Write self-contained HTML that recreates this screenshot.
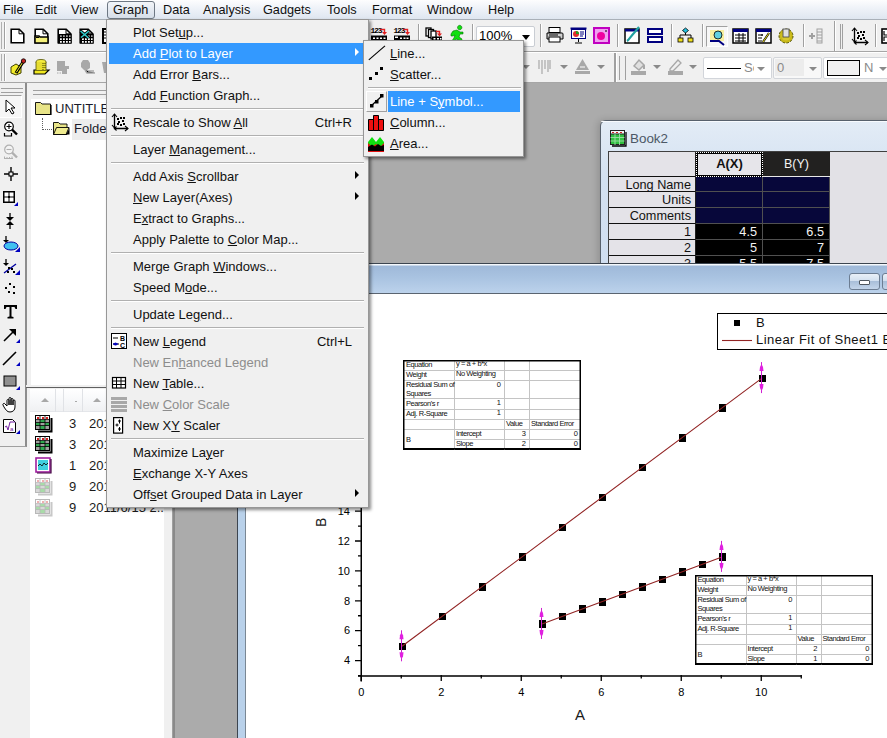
<!DOCTYPE html>
<html><head><meta charset="utf-8">
<style>
*{margin:0;padding:0;box-sizing:border-box}
html,body{width:887px;height:738px;overflow:hidden;background:#f0f0f0;font-family:"Liberation Sans",sans-serif;color:#000;position:relative}
.a{position:absolute}
.t{white-space:nowrap}
svg{overflow:visible}
.vsep{width:2px;border-left:1px solid #a0a0a0;border-right:1px solid #fff}
#menubar{left:0;top:0;width:887px;height:20px;background:linear-gradient(#fdfdfe,#eef2f8 45%,#dfe6f0);border-bottom:1px solid #a9b0b8}
#menubar span{position:absolute;top:3px;font-size:12.7px;line-height:14px;color:#101010}
#tb1{left:0;top:20px;width:887px;height:32px;background:#f0f0f0;border-bottom:1px solid #a6a6a6}
#tb2{left:0;top:52px;width:887px;height:31px;background:#f0f0f0;border-bottom:1px solid #a6a6a6;border-top:1px solid #fff}
#mdi{left:172px;top:83px;width:715px;height:655px;background:#ababab;border-left:1px solid #a0a0a0;box-shadow:inset 2px 0 0 #8a8a8a}
#lefttools{left:0;top:83px;width:27px;height:364px;background:#f0f0f0;border-right:2px solid #8c8c8c;border-bottom:1px solid #a0a0a0}
#splitv{left:164px;top:83px;width:8px;height:655px;background:#f0f0f0}
#menu{left:106px;top:19px;width:263px;height:489px;background:#f0f0f0;border:1px solid #979797;box-shadow:2px 2px 3px rgba(0,0,0,.45)}
#sub{left:363px;top:40px;width:161px;height:117px;background:#f0f0f0;border:1px solid #979797;box-shadow:2px 2px 3px rgba(0,0,0,.45)}
.mi{position:absolute;left:26px;font-size:13px;line-height:21px;height:21px;white-space:nowrap;color:#111}
.hl{position:absolute;left:2px;width:257px;height:21px;background:#3399ff}
.wt{color:#fff!important}
.sep{position:absolute;left:4px;right:4px;height:2px;border-top:1px solid #b0b0b0;border-bottom:1px solid #fff}
.dis{color:#8d8d8d}
.sc{position:absolute;right:16px;font-size:13px;line-height:21px;color:#111}
.arr{position:absolute;left:248px;width:0;height:0;border-left:4px solid #000;border-top:4px solid transparent;border-bottom:4px solid transparent}
.wt + .arr, .arrw{border-left-color:#fff}
u{text-decoration:underline;text-underline-offset:.9px;text-decoration-thickness:1px}
.smi{position:absolute;left:26px;font-size:13px;line-height:21px;height:21px;white-space:nowrap;color:#111}
/* book2 */
#book{left:600px;top:120px;width:300px;height:160px;background:linear-gradient(#dfe9f5,#cfdff0);border:1px solid #5a6470;border-radius:6px 0 0 0}
.cell{position:absolute;font-size:12.5px;line-height:16px;text-align:right;padding-right:4px;white-space:nowrap}
/* graph */
#gwin{left:237px;top:263px;width:660px;height:480px;background:linear-gradient(#aac3e0,#bcd3ec);border:1px solid #404850}
#plot{left:246px;top:294px;width:641px;height:444px;background:#fff}
.tk{position:absolute;background:#000}
.tl{position:absolute;font-size:11px;line-height:12px;white-space:nowrap;color:#000}
.pt{position:absolute;width:7.5px;height:7.5px;background:#000}
.st2{font-size:7.5px;line-height:10px;color:#111;letter-spacing:-.45px;transform:translateY(-1px)}
</style></head><body>
<div id="menubar" class="a">
 <span style="left:3px">File</span>
 <span style="left:35px">Edit</span>
 <span style="left:71px">View</span>
 <div class="a" style="left:107px;top:1px;width:48px;height:18px;border:1px solid #6e7884;border-radius:3px;background:linear-gradient(#f2f5f9,#d6dee9)"></div>
 <span style="left:113px">Graph</span>
 <span style="left:163px">Data</span>
 <span style="left:203px">Analysis</span>
 <span style="left:263px">Gadgets</span>
 <span style="left:327px">Tools</span>
 <span style="left:372px">Format</span>
 <span style="left:427px">Window</span>
 <span style="left:488px">Help</span>
</div>
<div id="tb1" class="a"></div>
<div id="tb2" class="a"></div>
<div class="a" style="left:1px;top:22px;width:1px;height:27px;background:#b0b0b0"></div><div class="a" style="left:4px;top:22px;width:2px;height:27px;border-left:1px solid #a0a0a0;border-right:1px solid #fff"></div>
<div class="a" style="left:1px;top:54px;width:1px;height:27px;background:#b0b0b0"></div><div class="a" style="left:4px;top:54px;width:2px;height:27px;border-left:1px solid #a0a0a0;border-right:1px solid #fff"></div>
<svg class="a" style="left:10px;top:28px" width="16" height="16" viewBox="0 0 16 16"><path d="M1.2 1.2h8l4.6 4.6v9h-12.6z" fill="#fff" stroke="#000" stroke-width="1.6"/><path d="M9 1.2v4.6h4.6" fill="none" stroke="#000" stroke-width="1"/></svg>
<svg class="a" style="left:34px;top:28px" width="16" height="16" viewBox="0 0 16 16"><path d="M1.2 1.2h8l4.6 4.6v9h-12.6z" fill="#fff" stroke="#000" stroke-width="1.6"/><path d="M9 1.2v4.6h4.6" fill="none" stroke="#000" stroke-width="1"/><path d="M1 8h4l1 1h8v6H1z" fill="#f4f07a" stroke="#000" stroke-width="1.5"/><path d="M2 9.5h3" stroke="#000"/></svg>
<svg class="a" style="left:57px;top:28px" width="16" height="16" viewBox="0 0 16 16"><path d="M1.2 1.2h8l4.6 4.6v9h-12.6z" fill="#fff" stroke="#000" stroke-width="1.6"/><path d="M9 1.2v4.6h4.6" fill="none" stroke="#000" stroke-width="1"/><rect x="1" y="6" width="13.6" height="9.6" fill="#000"/><path d="M3 7.3h1.8v1.8H3zM6 7.3h1.8v1.8H6zM9 7.3h1.8v1.8H9zM12 7.3h1.6v1.8H12z" fill="#a0a0a0"/><path d="M3 10.2h1.8v1.8H3zM6 10.2h1.8v1.8H6zM9 10.2h1.8v1.8H9zM12 10.2h1.6v1.8H12zM3 13.1h1.8v1.6H3zM6 13.1h1.8v1.6H6zM9 13.1h1.8v1.6H9zM12 13.1h1.6v1.6H12z" fill="#fff"/></svg>
<svg class="a" style="left:79px;top:28px" width="16" height="16" viewBox="0 0 16 16"><path d="M1.2 1.2h8l4.6 4.6v9h-12.6z" fill="#fff" stroke="#000" stroke-width="1.6"/><path d="M9 1.2v4.6h4.6" fill="none" stroke="#000" stroke-width="1"/><rect x="1" y="6" width="13.6" height="9.6" fill="#000"/><path d="M3 7.3h1.8v1.8H3zM6 7.3h1.8v1.8H6zM9 7.3h1.8v1.8H9zM12 7.3h1.6v1.8H12z" fill="#a0a0a0"/><path d="M3 10.2h1.8v1.8H3zM6 10.2h1.8v1.8H6zM9 10.2h1.8v1.8H9zM12 10.2h1.6v1.8H12zM3 13.1h1.8v1.6H3zM6 13.1h1.8v1.6H6zM9 13.1h1.8v1.6H9zM12 13.1h1.6v1.6H12z" fill="#fff"/><path d="M1.5 3l8 7M2 9.5l8-6.5" stroke="#000" stroke-width="3"/><path d="M1.5 3l8 7M2 9.5l8-6.5" stroke="#30c8c8" stroke-width="1.6"/></svg>
<svg class="a" style="left:101px;top:28px" width="6" height="16" viewBox="0 0 6 16"><path d="M2 1h5v14H2z" fill="#fff" stroke="#000" stroke-width="2"/><path d="M3 4h2M3 7h2M3 10h2" stroke="#000"/></svg>
<svg class="a" style="left:10px;top:58px" width="16" height="17" viewBox="0 0 16 17"><path d="M1 9l5-3 5 3v6l-5 2-5-2z" fill="#f3ec2a" stroke="#404000" stroke-width="1"/><path d="M6 15l7-11" stroke="#000" stroke-width="3.2"/><path d="M6.3 14.3l6.6-10.3" stroke="#f3ec2a" stroke-width="1"/><circle cx="13.5" cy="3" r="2.2" fill="#c02020" stroke="#000" stroke-width=".8"/></svg>
<svg class="a" style="left:33px;top:59px" width="17" height="16" viewBox="0 0 17 16"><path d="M1 11h15l-4 4H1z" fill="#f0e820" stroke="#000" stroke-width="1.2"/><ellipse cx="8" cy="3" rx="5" ry="2.5" fill="#f4ec40" stroke="#505000" stroke-width=".8"/><rect x="3" y="3" width="10" height="8" fill="#e6dd30"/><path d="M3 3v8M13 3v8" stroke="#505000" stroke-width=".8"/><path d="M10 4v7M12 4v6" stroke="#404000" stroke-dasharray="1 1"/></svg>
<svg class="a" style="left:56px;top:60px" width="16" height="15" viewBox="0 0 16 15"><path d="M1 1h8v5h4v3h-2v5H6v-3H1z" fill="#a8a8a8"/><path d="M1 10.5h5M1 13h5" stroke="#a8a8a8" stroke-dasharray="1.5 1"/></svg>
<svg class="a" style="left:80px;top:59px" width="15" height="16" viewBox="0 0 15 16"><path d="M3 1h5l2 3v5l-3 2H4L1 8V4z" fill="#a8a8a8"/><path d="M5 11l2 3h8M8 12h6" stroke="#a8a8a8" stroke-width="1.5"/></svg>
<svg class="a" style="left:102px;top:60px" width="5" height="15" viewBox="0 0 5 15"><path d="M0 2h5v11H2z" fill="#a8a8a8"/></svg>
<svg class="a" style="left:370px;top:26px" width="18" height="18" viewBox="0 0 18 18"><text x="0.5" y="7" font-size="8" font-family="Liberation Mono" font-weight="bold" letter-spacing="-1.2">123</text><path d="M10 3.5h4.5v3" stroke="#e02020" fill="none" stroke-width="1.4"/><path d="M12 6h5l-2.5 3z" fill="#e02020"/><rect x="1" y="9.5" width="16" height="5" fill="#000"/><path d="M3 11.5h2v1.5H3zM6.5 11.5h2v1.5h-2zM10 11.5h2v1.5h-2zM13.5 11.5h2v1.5h-2z" fill="#fff"/></svg>
<svg class="a" style="left:393px;top:26px" width="18" height="18" viewBox="0 0 18 18"><text x="0.5" y="7" font-size="8" font-family="Liberation Mono" font-weight="bold" letter-spacing="-1.2">123</text><path d="M10 3.5h4.5v3" stroke="#e02020" fill="none" stroke-width="1.4"/><path d="M12 6h5l-2.5 3z" fill="#e02020"/><rect x="1" y="9.5" width="16" height="5" fill="#000"/><path d="M2 10.5h3v1.5H2zM7 11.5h2v1.5H7zM10.5 11.5h2v1.5h-2zM13.5 11.5h2v1.5h-2z" fill="#fff"/></svg>
<div class="a vsep" style="left:418px;top:24px;height:23px"></div>
<svg class="a" style="left:425px;top:27px" width="18" height="18" viewBox="0 0 18 18"><rect x="1" y="1" width="5" height="8" fill="#fff" stroke="#000" stroke-width="1.3"/><rect x="3.5" y="2.5" width="5" height="8" fill="#fff" stroke="#000" stroke-width="1.3"/><rect x="6" y="4" width="5" height="8" fill="#fff" stroke="#000" stroke-width="1.3"/><path d="M11 4.5h3.5v2.5" stroke="#e02020" fill="none" stroke-width="1.4"/><path d="M12 6.5h5l-2.5 3z" fill="#e02020"/><rect x="7" y="9.5" width="10" height="4" fill="#000"/><path d="M8.5 11h2v1.5h-2zM12 11h2v1.5h-2zM15 11h1.5v1.5H15z" fill="#fff"/></svg>
<svg class="a" style="left:447px;top:26px" width="18" height="18" viewBox="0 0 18 18"><path d="M10.5 1.5a2.2 2.2 0 1 1 0 .1zM6 5l4-1 3 2 3 0v2l-3 0-1 3 3 2-1 4h-2l0-3-3-1-2 3H4l3-4 1-3-2 1-2 0v-2z" fill="#10e010" stroke="#007000" stroke-width=".6"/><path d="M0 17h6" stroke="#007000" stroke-width="1"/></svg>
<div class="a vsep" style="left:472px;top:24px;height:23px"></div>
<div class="a" style="left:476px;top:26px;width:59px;height:21px;background:#fff;border:1px solid #c9cdd3;border-radius:2px"></div><div class="a t" style="left:479px;top:29px;font-size:13px;line-height:14px">100%</div><div class="a" style="left:522px;top:35px;width:0;height:0;border-left:4px solid transparent;border-right:4px solid transparent;border-top:5px solid #000"></div>
<div class="a vsep" style="left:540px;top:24px;height:23px"></div>
<svg class="a" style="left:546px;top:27px" width="18" height="16" viewBox="0 0 18 16"><rect x="3" y=".5" width="11" height="5" fill="#fff" stroke="#000"/><path d="M1 6h15a1 1 0 0 1 1 1v5h-16z" fill="#d0d0d0" stroke="#000"/><rect x="3" y="10" width="11" height="5" fill="#fff" stroke="#000"/><path d="M3 8h9" stroke="#000"/></svg>
<svg class="a" style="left:570px;top:27px" width="17" height="17" viewBox="0 0 17 17"><rect x=".5" y=".5" width="16" height="2" fill="#000080"/><rect x="1.5" y="2.5" width="14" height="9" fill="#fff" stroke="#000080"/><circle cx="6" cy="7" r="3" fill="#e03030"/><path d="M6 7V4a3 3 0 0 1 3 3z" fill="#20a020"/><path d="M10 5h4M10 7h4M10 9h3" stroke="#000080"/><path d="M8.5 12v3M5 16h7" stroke="#000"/></svg>
<svg class="a" style="left:593px;top:27px" width="17" height="17" viewBox="0 0 17 17"><rect x="1" y="1" width="15" height="15" fill="#f0a0f0" stroke="#c000c0" stroke-width="2"/><circle cx="8" cy="9" r="4" fill="#f000a0"/><path d="M12 4h2" stroke="#000"/></svg>
<div class="a vsep" style="left:617px;top:24px;height:23px"></div>
<svg class="a" style="left:624px;top:27px" width="17" height="17" viewBox="0 0 17 17"><rect x="1" y="2" width="14" height="14" fill="#fff" stroke="#000" stroke-width="1.5"/><rect x="1" y="2" width="14" height="2.5" fill="#000080"/><path d="M3 14c2-1 4-5 7-8l5-6" stroke="#20a0a0" stroke-width="2.2" fill="none"/></svg>
<svg class="a" style="left:647px;top:28px" width="16" height="15" viewBox="0 0 16 15"><rect x="1" y="1" width="14" height="5" fill="#fff" stroke="#000080" stroke-width="2"/><rect x="1" y="9" width="14" height="5" fill="#fff" stroke="#000080" stroke-width="2"/></svg>
<div class="a vsep" style="left:671px;top:24px;height:23px"></div>
<svg class="a" style="left:677px;top:27px" width="17" height="17" viewBox="0 0 17 17"><path d="M8.5 5v3M3 11V8h11v3" stroke="#000" fill="none"/><path d="M8.5 1l3 2.5-3 2.5-3-2.5z" fill="#20c0e0" stroke="#000" stroke-width=".8"/><rect x="1" y="11" width="5" height="4" fill="#f0e020" stroke="#000" stroke-width=".8"/><rect x="11" y="11" width="5" height="4" fill="#f0e020" stroke="#000" stroke-width=".8"/></svg>
<div class="a vsep" style="left:702px;top:24px;height:23px"></div>
<div class="a" style="left:706px;top:26px;width:22px;height:21px;background:#f7f7f7;border:1px solid;border-color:#a0a0a0 #fff #fff #a0a0a0"></div>
<svg class="a" style="left:709px;top:29px" width="17" height="16" viewBox="0 0 17 16"><rect x="1" y="1" width="14" height="11" fill="#f7f0a0"/><circle cx="9" cy="6" r="4" fill="#60d0e0" stroke="#000" stroke-width=".8"/><path d="M1 12h9l5 4" stroke="#000080" stroke-width="2" fill="none"/></svg>
<svg class="a" style="left:732px;top:28px" width="17" height="16" viewBox="0 0 17 16"><rect x="1" y="1" width="15" height="14" fill="#fff" stroke="#000" stroke-width="1.5"/><rect x="1" y="1" width="15" height="3" fill="#000080"/><path d="M3 7h11M3 10h11M3 13h11M7 5v9M11 5v9" stroke="#000"/></svg>
<svg class="a" style="left:755px;top:28px" width="17" height="16" viewBox="0 0 17 16"><rect x="1" y="1" width="15" height="14" fill="#fff" stroke="#000" stroke-width="1.5"/><rect x="1" y="1" width="15" height="3" fill="#000080"/><path d="M3 7h5M3 10h4M3 13h4M7 6v2" stroke="#000"/><path d="M8 14l6-9" stroke="#000" stroke-width="2.2"/><path d="M8 14l6-9" stroke="#f0e020" stroke-width="1"/></svg>
<svg class="a" style="left:777px;top:27px" width="18" height="17" viewBox="0 0 18 17"><circle cx="9" cy="9" r="7" fill="#c8b818" stroke="#505000" stroke-width="1" stroke-dasharray="2.5 1.5"/><circle cx="9" cy="9" r="4.5" fill="#d8c830"/><rect x="6" y="2" width="6" height="8" fill="#e0e0e0" stroke="#404040" stroke-width=".8"/></svg>
<div class="a vsep" style="left:803px;top:24px;height:23px"></div>
<svg class="a" style="left:808px;top:28px" width="16" height="16" viewBox="0 0 16 16"><path d="M1 8h6M4 5v6" stroke="#a0a0a0" stroke-width="2"/><rect x="9" y="1" width="5" height="14" fill="none" stroke="#a0a0a0"/><path d="M9 4h5M9 7h5M9 10h5M9 13h5" stroke="#a0a0a0"/></svg>
<div class="a" style="left:834px;top:21px;width:2px;height:30px;background:#a0a0a0;border-right:1px solid #fff"></div>
<div class="a" style="left:840px;top:24px;width:3px;height:25px;border-left:1px solid #a0a0a0;border-right:1px solid #a0a0a0"></div>
<svg class="a" style="left:851px;top:27px" width="18" height="18" viewBox="0 0 18 18"><path d="M3.5 1.5V15.5H17" stroke="#000" stroke-width="1.3" fill="none"/><path d="M1 4l2.5-3 2.5 3M1 12l2.5 3M14 13l3 2.5-3 2.5M5.5 13.5l-2 2 2 2" stroke="#000" fill="none" stroke-width="1.1"/><path d="M6 5h2v2H6zM9 4h2v2H9zM12 4h2v2h-2zM7 8h2v2H7zM11 7h2v2h-2zM6 10h2v2H6zM9 11h2v2H9zM12 10h2v2h-2z" fill="#000"/></svg>
<div class="a vsep" style="left:875px;top:24px;height:23px"></div>
<svg class="a" style="left:881px;top:28px" width="8" height="16" viewBox="0 0 8 16"><rect x="1" y="1" width="14" height="14" fill="#fff" stroke="#000" stroke-width="1.6"/><path d="M3 3v4h3M3 13V9h3" stroke="#000" stroke-width="1.2" fill="none"/></svg>
<div class="a" style="left:522px;top:65px;width:0;height:0;border-left:4px solid transparent;border-right:4px solid transparent;border-top:4px solid #8a8a8a"></div>
<svg class="a" style="left:538px;top:59px" width="13" height="16" viewBox="0 0 13 16"><path d="M1 1v9M4 1v14M7 1v9M10 1v12M12 1v9" stroke="#a8a8a8" stroke-width="1.2"/></svg>
<div class="a" style="left:559.5px;top:65px;width:0;height:0;border-left:4px solid transparent;border-right:4px solid transparent;border-top:4px solid #8a8a8a"></div>
<svg class="a" style="left:574px;top:58px" width="17" height="17" viewBox="0 0 17 17"><path d="M8.5 1L2 12h13z" fill="#a8a8a8"/><rect x="1" y="13" width="15" height="3" fill="#a8a8a8"/><path d="M6 9h5" stroke="#fff"/></svg>
<div class="a" style="left:597px;top:65px;width:0;height:0;border-left:4px solid transparent;border-right:4px solid transparent;border-top:4px solid #8a8a8a"></div>
<div class="a" style="left:614px;top:53px;width:3px;height:29px;border-left:2px solid #a0a0a0;border-right:1px solid #fff"></div><div class="a" style="left:619px;top:56px;width:7px;height:24px;border-left:1px solid #a0a0a0;border-right:1px solid #a0a0a0"></div>
<svg class="a" style="left:630px;top:58px" width="17" height="17" viewBox="0 0 17 17"><path d="M4 8l5-6 5 5-5 5z" fill="#e0e0e0" stroke="#a8a8a8" stroke-width="1.5"/><path d="M14 7v4" stroke="#a8a8a8" stroke-width="2"/><rect x="1" y="13" width="15" height="4" fill="#a8a8a8"/></svg>
<div class="a" style="left:652.5px;top:65px;width:0;height:0;border-left:4px solid transparent;border-right:4px solid transparent;border-top:4px solid #8a8a8a"></div>
<svg class="a" style="left:667px;top:58px" width="17" height="17" viewBox="0 0 17 17"><path d="M3 11l8-9 3 3-8 8H3z" fill="#f0f0f0" stroke="#a8a8a8" stroke-width="1.3"/><rect x="1" y="13" width="15" height="4" fill="#a8a8a8"/></svg>
<div class="a" style="left:689px;top:65px;width:0;height:0;border-left:4px solid transparent;border-right:4px solid transparent;border-top:4px solid #8a8a8a"></div>
<div class="a" style="left:703px;top:57px;width:69px;height:22px;background:#fff;border:1px solid #d2d5da;border-radius:2px"></div><div class="a" style="left:707px;top:68px;width:34px;height:1px;background:#000"></div><div class="a t" style="left:744px;top:61px;font-size:13px;line-height:14px;color:#8a8a8a">Sc</div><div class="a" style="left:754px;top:58px;width:17px;height:20px;background:#fff"></div><div class="a" style="left:757px;top:67px;width:0;height:0;border-left:4px solid transparent;border-right:4px solid transparent;border-top:4px solid #8a8a8a"></div>
<div class="a" style="left:773px;top:57px;width:49px;height:22px;background:#f8f8f8;border:1px solid #d2d5da;border-radius:2px"></div><div class="a" style="left:775px;top:59px;width:29px;height:17px;background:#ececec"></div><div class="a t" style="left:777px;top:61px;font-size:13px;line-height:14px;color:#8a8a8a">0</div><div class="a" style="left:809px;top:67px;width:0;height:0;border-left:4px solid transparent;border-right:4px solid transparent;border-top:4px solid #8a8a8a"></div>
<div class="a" style="left:823px;top:57px;width:70px;height:22px;background:#fff;border:1px solid #d2d5da;border-radius:2px"></div><div class="a" style="left:827px;top:60px;width:33px;height:16px;background:#f0f0f0;border:1px solid #000"></div><div class="a t" style="left:864px;top:61px;font-size:13px;line-height:14px;color:#8a8a8a">N</div><div class="a" style="left:879px;top:67px;width:0;height:0;border-left:4px solid transparent;border-right:4px solid transparent;border-top:4px solid #8a8a8a"></div>
<div id="mdi" class="a"></div>
<div id="splitv" class="a"></div>
<div id="lefttools" class="a"></div>
<div class="a" style="left:1px;top:88px;width:22px;height:5px;border-top:1px solid #a0a0a0;border-bottom:1px solid #a0a0a0"></div>
<div class="a" style="left:0px;top:95px;width:22px;height:23px;background:#f6f6f6;border-top:1px solid #a0a0a0;border-right:1px solid #fff;border-bottom:1px solid #fff"></div>
<svg class="a" style="left:5px;top:99px" width="12" height="16" viewBox="0 0 12 16"><path d="M1 1v12l3-3 3 5 2-1-3-5h4z" fill="#fff" stroke="#000"/></svg>
<svg class="a" style="left:3px;top:121px" width="16" height="17" viewBox="0 0 16 17"><circle cx="6" cy="5.5" r="4.3" fill="#fff" stroke="#000" stroke-width="1.2"/><path d="M3.5 5.5h5M6 3v5" stroke="#000" stroke-width="1.1"/><path d="M9 8.5l5 5" stroke="#000" stroke-width="2.4"/><path d="M1.5 12v3h7v-3" stroke="#000" fill="none" stroke-width="1.2"/></svg>
<svg class="a" style="left:3px;top:144px" width="16" height="17" viewBox="0 0 16 17"><circle cx="6" cy="5.5" r="4.3" fill="#f4f4f4" stroke="#b0b0b0" stroke-width="1.2"/><path d="M3.5 5.5h5" stroke="#b0b0b0" stroke-width="1.1"/><path d="M9 8.5l5 5" stroke="#b0b0b0" stroke-width="2.4"/><path d="M1 14.5h9M1.5 12.5v2M4 13v2M6.5 13v2M9 12.5v2" stroke="#b0b0b0" fill="none"/></svg>
<svg class="a" style="left:4px;top:167px" width="14" height="14" viewBox="0 0 14 14"><path d="M7 0v5M7 9v5M0 7h5M9 7h5" stroke="#000" stroke-width="1.4"/><rect x="5" y="5" width="4" height="4" fill="none" stroke="#000" stroke-width="1.1"/></svg>
<svg class="a" style="left:2px;top:190px" width="18" height="17" viewBox="0 0 18 17"><rect x="1" y="1" width="12" height="12" fill="#000"/><path d="M2.5 2.5h4v4h-4zM7.5 2.5h4v4h-4zM2.5 7.5h4v4h-4zM7.5 7.5h4v4h-4z" fill="#fff"/><path d="M6 6h2v2H6z" fill="#000"/><path d="M16 12v4h-4z" fill="#0000c0"/></svg>
<svg class="a" style="left:3px;top:213px" width="14" height="16" viewBox="0 0 14 16"><path d="M7 0v5M7 11v5" stroke="#000" stroke-width="1.3"/><path d="M3 4l4 4 4-4zM3 12l4-4 4 4z" fill="#000"/></svg>
<svg class="a" style="left:2px;top:236px" width="19" height="16" viewBox="0 0 19 16"><path d="M4 0v5" stroke="#000" stroke-width="1.3"/><path d="M1 4l3 3 3-3z" fill="#000"/><ellipse cx="9" cy="10" rx="7" ry="4" fill="#40c0f0" stroke="#0000a0" stroke-width="1"/><path d="M18 11v5h-5z" fill="#0000c0"/></svg>
<svg class="a" style="left:2px;top:259px" width="19" height="16" viewBox="0 0 19 16"><path d="M4 0v5" stroke="#000" stroke-width="1.3"/><path d="M1 4l3 3 3-3z" fill="#000"/><path d="M2 14l12-9" stroke="#0000a0" stroke-width="1.3"/><path d="M6 8h2v2H6zM9 9h2v2H9zM11 12h2v2h-2zM5 12h2v2H5z" fill="#000"/><path d="M18 11v5h-5z" fill="#0000c0"/></svg>
<svg class="a" style="left:4px;top:282px" width="14" height="14" viewBox="0 0 14 14"><path d="M5 1h2v2H5zM1 5h2v2H1zM9 4h2v2H9zM4 9h2v2H4zM9 10h2v2H9z" fill="#000"/></svg>
<svg class="a" style="left:3px;top:304px" width="15" height="15" viewBox="0 0 15 15"><path d="M1 1h13v4h-1.5l-1-2H8.5v9.5l2 .5v1.5h-6V13l2-.5V3H3.5l-1 2H1z" fill="#000"/></svg>
<svg class="a" style="left:2px;top:327px" width="19" height="17" viewBox="0 0 19 17"><path d="M2 14L12 4" stroke="#000" stroke-width="1.6"/><path d="M7 2h7v7z" fill="#000"/><path d="M18 12v4h-4z" fill="#0000c0"/></svg>
<svg class="a" style="left:2px;top:350px" width="19" height="17" viewBox="0 0 19 17"><path d="M1 15L14 2" stroke="#000" stroke-width="1.6"/><path d="M18 12v4h-4z" fill="#0000c0"/></svg>
<svg class="a" style="left:2px;top:374px" width="19" height="17" viewBox="0 0 19 17"><rect x="2" y="2" width="12" height="10" fill="#909090" stroke="#000" stroke-width="1"/><path d="M18 12v4h-4z" fill="#0000c0"/></svg>
<svg class="a" style="left:3px;top:396px" width="16" height="17" viewBox="0 0 16 17"><path d="M4 10V4.5a1 1 0 0 1 2 0V9V2.5a1 1 0 0 1 2 0V9V3.5a1 1 0 0 1 2 0V9V5a1 1 0 0 1 2 0v6c0 3-2 5-5 5s-4-2-6-5l-1-2a1 1 0 0 1 2-1z" fill="#fff" stroke="#000" stroke-width="1"/></svg>
<svg class="a" style="left:2px;top:418px" width="19" height="17" viewBox="0 0 19 17"><path d="M1.5 1.5h9l3 3v10h-12z" fill="#fff" stroke="#000"/><path d="M3 9l1.5-1 1.5 4 2-8h5" stroke="#7020a0" fill="none"/><text x="8" y="13" font-size="6" fill="#7020a0" font-family="Liberation Sans">a</text><path d="M18 12v4h-4z" fill="#0000c0"/></svg>
<div class="a" style="left:33px;top:90px;width:74px;height:5px;border-top:1px solid #a0a0a0;border-bottom:1px solid #a0a0a0"></div>
<div class="a" style="left:31px;top:99px;width:133px;height:287px;background:#fff"></div>
<svg class="a" style="left:35px;top:100px" width="17" height="16" viewBox="0 0 17 16"><path d="M.5 2.5h5l1.5 1.5h8.5v10.5h-15z" fill="#e8e488" stroke="#000" stroke-width=".9"/><path d="M1 14.5h15V5" stroke="#000" stroke-width="1.2" fill="none"/></svg>
<div class="a t" style="left:55px;top:101px;font-size:13px;line-height:15px;color:#1a1a2a">UNTITLE</div>
<div class="a" style="left:42px;top:118px;width:1px;height:12px;border-left:1px dotted #606060"></div><div class="a" style="left:42px;top:129px;width:12px;height:1px;border-top:1px dotted #606060"></div>
<div class="a" style="left:72px;top:119px;width:36px;height:21px;background:#ededed"></div>
<svg class="a" style="left:53px;top:120px" width="17" height="16" viewBox="0 0 17 16"><path d="M.5 2.5h5l1.5 1.5h7v10.5H.5z" fill="#e8e488" stroke="#000" stroke-width=".9"/><path d="M.5 14.5l3-7h12.5l-3 7z" fill="#f0ec90" stroke="#000" stroke-width=".9"/><path d="M13.5 14.5l3-7v7z" fill="#000"/></svg>
<div class="a t" style="left:74px;top:121px;font-size:13px;line-height:15px;color:#1a1a2a">Folde</div>
<div class="a" style="left:26px;top:385px;width:144px;height:3px;background:#f0f0f0;border-bottom:1px solid #606060"></div>
<div class="a" style="left:30px;top:389px;width:134px;height:349px;background:#fff"></div>
<div class="a" style="left:30px;top:389px;width:134px;height:23px;background:linear-gradient(#fff,#f7f8fa 50%,#f0f1f3);border-bottom:1px solid #e4e6ea"></div>
<div class="a" style="left:55px;top:389px;width:1px;height:23px;background:#e0e2e6"></div>
<div class="a" style="left:63px;top:389px;width:1px;height:23px;background:#e0e2e6"></div>
<div class="a" style="left:82px;top:389px;width:1px;height:23px;background:#e0e2e6"></div>
<div class="a" style="left:41px;top:398px;width:0;height:0;border-left:4px solid transparent;border-right:4px solid transparent;border-bottom:4px solid #a8a8a8"></div>
<div class="a" style="left:93px;top:398px;width:0;height:0;border-left:4px solid transparent;border-right:4px solid transparent;border-bottom:4px solid #a8a8a8"></div>
<div class="a" style="left:75px;top:401px;width:2px;height:1px;background:#a8a8a8"></div>
<svg class="a" style="left:35px;top:415px" width="17" height="17" viewBox="0 0 17 17"><path d="M3 16.5h13.5V3" stroke="#000" stroke-width="2" fill="none"/><rect x=".5" y=".5" width="14" height="14" fill="#fff" stroke="#000"/><path d="M2 2h2v2H2zM7 2h2v2H7zM11 2h2v2h-2z" fill="#d02020"/><path d="M1 5h4v3H1zM10 5h4v3h-4zM5 8h5v3H5zM1 11h4v3H1zM10 11h4v3h-4z" fill="#a0a0a0"/><path d="M5 5h5v3H5zM1 8h4v3H1zM10 8h4v3h-4zM5 11h5v3H5z" fill="#30a850"/><path d="M.5 4.5h14M.5 7.5h14M.5 10.5h14M5 .5v14M10 .5v14" stroke="#000" stroke-width=".8"/></svg>
<div class="a t" style="left:69px;top:416px;font-size:13px;line-height:15px;color:#1a1a1a">3</div>
<div class="a t" style="left:89px;top:416px;font-size:13px;line-height:15px;color:#1a1a1a">2011/6/15 2..</div>
<svg class="a" style="left:35px;top:436px" width="17" height="17" viewBox="0 0 17 17"><path d="M3 16.5h13.5V3" stroke="#000" stroke-width="2" fill="none"/><rect x=".5" y=".5" width="14" height="14" fill="#fff" stroke="#000"/><path d="M2 2h2v2H2zM7 2h2v2H7zM11 2h2v2h-2z" fill="#d02020"/><path d="M1 5h4v3H1zM10 5h4v3h-4zM5 8h5v3H5zM1 11h4v3H1zM10 11h4v3h-4z" fill="#a0a0a0"/><path d="M5 5h5v3H5zM1 8h4v3H1zM10 8h4v3h-4zM5 11h5v3H5z" fill="#30a850"/><path d="M.5 4.5h14M.5 7.5h14M.5 10.5h14M5 .5v14M10 .5v14" stroke="#000" stroke-width=".8"/></svg>
<div class="a t" style="left:69px;top:437px;font-size:13px;line-height:15px;color:#1a1a1a">3</div>
<div class="a t" style="left:89px;top:437px;font-size:13px;line-height:15px;color:#1a1a1a">2011/6/15 2..</div>
<svg class="a" style="left:35px;top:457px" width="17" height="17" viewBox="0 0 17 17"><rect x="1" y="1" width="14" height="14" fill="#fff" stroke="#a020a0" stroke-width="1.6"/><rect x="3" y="3" width="10" height="10" fill="#40d0e0"/><path d="M3 9l2-2 2 2 2-3 2 2 2-2" stroke="#000" fill="none" stroke-width=".8"/><path d="M2 16h14V2" stroke="#400040" stroke-width="1.2" fill="none"/></svg>
<div class="a t" style="left:69px;top:458px;font-size:13px;line-height:15px;color:#1a1a1a">1</div>
<div class="a t" style="left:89px;top:458px;font-size:13px;line-height:15px;color:#1a1a1a">2011/6/15 2..</div>
<svg class="a" style="left:35px;top:478px" width="17" height="17" viewBox="0 0 17 17"><path d="M3 16.5h13.5V3" stroke="#c8c8c8" stroke-width="2" fill="none"/><rect x=".5" y=".5" width="14" height="14" fill="#fff" stroke="#b8b8b8"/><path d="M2 2h2v2H2zM7 2h2v2H7zM11 2h2v2h-2z" fill="#f0b0b0"/><path d="M1 5h4v3H1zM10 5h4v3h-4zM5 8h5v3H5zM1 11h4v3H1zM10 11h4v3h-4z" fill="#d8d8d8"/><path d="M5 5h5v3H5zM1 8h4v3H1zM10 8h4v3h-4zM5 11h5v3H5z" fill="#a8dca8"/><path d="M.5 4.5h14M.5 7.5h14M.5 10.5h14M5 .5v14M10 .5v14" stroke="#b8b8b8" stroke-width=".8"/></svg>
<div class="a t" style="left:69px;top:479px;font-size:13px;line-height:15px;color:#1a1a1a">9</div>
<div class="a t" style="left:89px;top:479px;font-size:13px;line-height:15px;color:#1a1a1a">2011/6/15 2..</div>
<svg class="a" style="left:35px;top:499px" width="17" height="17" viewBox="0 0 17 17"><path d="M3 16.5h13.5V3" stroke="#c8c8c8" stroke-width="2" fill="none"/><rect x=".5" y=".5" width="14" height="14" fill="#fff" stroke="#b8b8b8"/><path d="M2 2h2v2H2zM7 2h2v2H7zM11 2h2v2h-2z" fill="#f0b0b0"/><path d="M1 5h4v3H1zM10 5h4v3h-4zM5 8h5v3H5zM1 11h4v3H1zM10 11h4v3h-4z" fill="#d8d8d8"/><path d="M5 5h5v3H5zM1 8h4v3H1zM10 8h4v3h-4zM5 11h5v3H5z" fill="#a8dca8"/><path d="M.5 4.5h14M.5 7.5h14M.5 10.5h14M5 .5v14M10 .5v14" stroke="#b8b8b8" stroke-width=".8"/></svg>
<div class="a t" style="left:69px;top:500px;font-size:13px;line-height:15px;color:#1a1a1a">9</div>
<div class="a t" style="left:89px;top:500px;font-size:13px;line-height:15px;color:#1a1a1a">2011/6/15 2..</div>
<div class="a" style="left:600px;top:120px;width:300px;height:150px;background:linear-gradient(#e3ecf6,#d3e1f1 40%,#d0def0);border:1px solid #58616c;border-radius:6px 0 0 0;box-shadow:-2px 0 7px rgba(0,0,0,.16)"></div>
<div class="a" style="left:601px;top:121px;width:290px;height:1px;background:#f8fbfe;border-radius:6px 0 0 0"></div>
<svg class="a" style="left:610px;top:130px" width="17" height="17" viewBox="0 0 17 17"><rect x=".5" y=".5" width="14" height="14" fill="#30c040" stroke="#222" stroke-width="1"/><rect x=".5" y=".5" width="14" height="3.5" fill="#f4f4f4" stroke="#222" stroke-width="1"/><path d="M2 2h2v1H2zM6 2h2v1H6zM10 2h2v1h-2z" fill="#d02020"/><path d="M.5 7.5h14M.5 11h14M5 4v11M9.5 4v11" stroke="#9fdfa8" stroke-width=".9"/><path d="M2 16h14V2" stroke="#000" stroke-width="1.3" fill="none"/></svg>
<div class="a t" style="left:630px;top:131px;font-size:13.4px;line-height:16px;color:#4c5866">Book2</div>
<div class="a" style="left:608px;top:151px;width:290px;height:120px;background:#e2e1e6;border-top:1px solid #404040;border-left:1px solid #404040"></div>
<div class="a" style="left:609px;top:152px;width:87px;height:25px;background:#e4e3e8;border-bottom:1px solid #101010"></div>
<div class="a" style="left:609px;top:177px;width:87px;height:15px;background:#e4e3e8;border-bottom:1px solid #101010"></div>
<div class="a" style="left:609px;top:192px;width:87px;height:16px;background:#e4e3e8;border-bottom:1px solid #101010"></div>
<div class="a" style="left:609px;top:208px;width:87px;height:16px;background:#e4e3e8;border-bottom:1px solid #101010"></div>
<div class="a" style="left:609px;top:224px;width:87px;height:16px;background:#e4e3e8;border-bottom:1px solid #101010"></div>
<div class="a" style="left:609px;top:240px;width:87px;height:16px;background:#e4e3e8;border-bottom:1px solid #101010"></div>
<div class="a" style="left:609px;top:256px;width:87px;height:16px;background:#e4e3e8;border-bottom:1px solid #101010"></div>
<div class="a" style="left:695px;top:152px;width:1px;height:120px;background:#202020"></div>
<div class="a" style="left:696px;top:152px;width:67px;height:25px;background:#000;border:1px dotted #fff"></div><div class="a" style="left:698px;top:154px;width:63px;height:21px;background:#e6e5ea"></div>
<div class="a t" style="left:696px;top:152px;width:67px;height:24px;font-size:13px;font-weight:bold;line-height:24px;text-align:center;color:#111">A(X)</div>
<div class="a" style="left:763px;top:152px;width:67px;height:25px;background:#222120;border-bottom:1px solid #e8e8e8"></div>
<div class="a t" style="left:763px;top:152px;width:67px;height:24px;font-size:12.5px;line-height:24px;text-align:center;color:#f4f4f4">B(Y)</div>
<div class="a" style="left:696px;top:177px;width:67px;height:15px;background:#07073a;border-right:1px solid #505050;border-bottom:1px solid #505050"></div>
<div class="a" style="left:763px;top:177px;width:67px;height:15px;background:#07073a;border-right:1px solid #505050;border-bottom:1px solid #505050"></div>
<div class="a" style="left:696px;top:192px;width:67px;height:16px;background:#07073a;border-right:1px solid #505050;border-bottom:1px solid #505050"></div>
<div class="a" style="left:763px;top:192px;width:67px;height:16px;background:#07073a;border-right:1px solid #505050;border-bottom:1px solid #505050"></div>
<div class="a" style="left:696px;top:208px;width:67px;height:16px;background:#07073a;border-right:1px solid #505050;border-bottom:1px solid #505050"></div>
<div class="a" style="left:763px;top:208px;width:67px;height:16px;background:#07073a;border-right:1px solid #505050;border-bottom:1px solid #505050"></div>
<div class="a" style="left:696px;top:224px;width:67px;height:16px;background:#000;border-right:1px solid #505050;border-bottom:1px solid #505050"></div>
<div class="a" style="left:763px;top:224px;width:67px;height:16px;background:#000;border-right:1px solid #505050;border-bottom:1px solid #505050"></div>
<div class="a" style="left:696px;top:240px;width:67px;height:16px;background:#000;border-right:1px solid #505050;border-bottom:1px solid #505050"></div>
<div class="a" style="left:763px;top:240px;width:67px;height:16px;background:#000;border-right:1px solid #505050;border-bottom:1px solid #505050"></div>
<div class="a" style="left:696px;top:256px;width:67px;height:16px;background:#000;border-right:1px solid #505050;border-bottom:1px solid #505050"></div>
<div class="a" style="left:763px;top:256px;width:67px;height:16px;background:#000;border-right:1px solid #505050;border-bottom:1px solid #505050"></div>
<div class="a t" style="left:609px;top:177px;width:86px;height:15px;font-size:12.7px;line-height:16px;text-align:right;padding-right:4px;color:#111">Long Name</div>
<div class="a t" style="left:609px;top:192px;width:86px;height:16px;font-size:12.7px;line-height:17px;text-align:right;padding-right:4px;color:#111">Units</div>
<div class="a t" style="left:609px;top:208px;width:86px;height:16px;font-size:12.7px;line-height:17px;text-align:right;padding-right:4px;color:#111">Comments</div>
<div class="a t" style="left:609px;top:224px;width:86px;height:16px;font-size:12.7px;line-height:17px;text-align:right;padding-right:4px;color:#111">1</div>
<div class="a t" style="left:609px;top:240px;width:86px;height:16px;font-size:12.7px;line-height:17px;text-align:right;padding-right:4px;color:#111">2</div>
<div class="a t" style="left:609px;top:256px;width:86px;height:16px;font-size:12.7px;line-height:17px;text-align:right;padding-right:4px;color:#111">3</div>
<div class="a t" style="left:696px;top:224px;width:61px;height:16px;font-size:12.7px;line-height:17px;text-align:right;color:#f4f4f4">4.5</div>
<div class="a t" style="left:763px;top:224px;width:61px;height:16px;font-size:12.7px;line-height:17px;text-align:right;color:#f4f4f4">6.5</div>
<div class="a t" style="left:696px;top:240px;width:61px;height:16px;font-size:12.7px;line-height:17px;text-align:right;color:#f4f4f4">5</div>
<div class="a t" style="left:763px;top:240px;width:61px;height:16px;font-size:12.7px;line-height:17px;text-align:right;color:#f4f4f4">7</div>
<div class="a t" style="left:696px;top:256px;width:61px;height:16px;font-size:12.7px;line-height:17px;text-align:right;color:#f4f4f4">5.5</div>
<div class="a t" style="left:763px;top:256px;width:61px;height:16px;font-size:12.7px;line-height:17px;text-align:right;color:#f4f4f4">7.5</div>
<div class="a" style="left:237px;top:263px;width:660px;height:480px;background:#b9d1ea;border:1px solid #3c4550"></div>
<div class="a" style="left:238px;top:264px;width:650px;height:30px;background:linear-gradient(#f4f8fc 0,#f4f8fc 1px,#9fb9d9 2px,#a9c3e1 45%,#bdd3ec)"></div>
<div class="a" style="left:245px;top:293px;width:642px;height:445px;background:#fff;border-top:1px solid #5a6470;border-left:1px solid #7a8794"></div>
<div class="pt" style="left:398.5px;top:642.7px"></div>
<div class="pt" style="left:438.5px;top:612.9px"></div>
<div class="pt" style="left:478.5px;top:583.1px"></div>
<div class="pt" style="left:518.5px;top:553.3px"></div>
<div class="pt" style="left:558.5px;top:523.5px"></div>
<div class="pt" style="left:598.5px;top:493.7px"></div>
<div class="pt" style="left:638.5px;top:463.9px"></div>
<div class="pt" style="left:678.5px;top:434.1px"></div>
<div class="pt" style="left:718.5px;top:404.3px"></div>
<div class="pt" style="left:758.5px;top:374.5px"></div>
<div class="pt" style="left:538.5px;top:620.3px"></div>
<div class="pt" style="left:558.5px;top:612.9px"></div>
<div class="pt" style="left:578.5px;top:605.4px"></div>
<div class="pt" style="left:598.5px;top:598.0px"></div>
<div class="pt" style="left:618.5px;top:590.5px"></div>
<div class="pt" style="left:638.5px;top:583.1px"></div>
<div class="pt" style="left:658.5px;top:575.6px"></div>
<div class="pt" style="left:678.5px;top:568.2px"></div>
<div class="pt" style="left:698.5px;top:560.7px"></div>
<div class="pt" style="left:718.5px;top:553.3px"></div>
<div class="a" style="left:849px;top:273px;width:31px;height:17px;border:1px solid #6c7d92;border-radius:3px;background:linear-gradient(#e9f0f8,#d3e0ef 45%,#a9bfd9 50%,#c3d5ea)"></div>
<div class="a" style="left:859px;top:280px;width:11px;height:5px;background:#fff;border:1px solid #505860;border-radius:1px"></div>
<div class="a" style="left:882px;top:273px;width:10px;height:17px;border:1px solid #6c7d92;border-radius:3px;background:linear-gradient(#e9f0f8,#d3e0ef 45%,#a9bfd9 50%,#c3d5ea)"></div>
<svg class="a" style="left:0;top:0" width="887" height="738" viewBox="0 0 887 738">
<path d="M361.25 300V681.5M358 675.9H801.5" stroke="#000" stroke-width="1.5" fill="none"/>
<path d="M358 675.55H361 M355 660.60H361 M358 645.65H361 M355 630.70H361 M358 615.75H361 M355 600.80H361 M358 585.85H361 M355 570.90H361 M358 555.95H361 M355 541.00H361 M358 526.05H361 M355 511.10H361 M358 496.15H361 M355 481.20H361 M358 466.25H361 M355 451.30H361 M358 436.35H361 M355 421.40H361 M358 406.45H361 M355 391.50H361 M358 376.55H361 M355 361.60H361 M361.25 675V681 M401.25 675V678.5 M441.25 675V681 M481.25 675V678.5 M521.25 675V681 M561.25 675V678.5 M601.25 675V681 M641.25 675V678.5 M681.25 675V681 M721.25 675V678.5 M761.25 675V681 M801.25 675V678.5" stroke="#000" stroke-width="1.3" fill="none"/>
<path d="M402 646.30L762 378.10M542.0 623.95L722 556.90" stroke="#922424" stroke-width="1.1" fill="none"/>
<path d="M722 340.5H752" stroke="#922424" stroke-width="1.1"/>
<path d="M401.5 630.3V661.3" stroke="#d020d0" stroke-width="1"/><path d="M399.5 639.3L403.5 639.3L403.0 635.3L401.5 632.3L400.0 635.3z" fill="#e020e0"/><path d="M399.5 652.3L403.5 652.3L403.0 656.3L401.5 659.3L400.0 656.3z" fill="#e020e0"/>
<path d="M761.5 362.09999999999997V393.09999999999997" stroke="#d020d0" stroke-width="1"/><path d="M759.5 371.09999999999997L763.5 371.09999999999997L763.0 367.09999999999997L761.5 364.09999999999997L760.0 367.09999999999997z" fill="#e020e0"/><path d="M759.5 384.09999999999997L763.5 384.09999999999997L763.0 388.09999999999997L761.5 391.09999999999997L760.0 388.09999999999997z" fill="#e020e0"/>
<path d="M541.5 607.9499999999999V638.9499999999999" stroke="#d020d0" stroke-width="1"/><path d="M539.5 616.9499999999999L543.5 616.9499999999999L543.0 612.9499999999999L541.5 609.9499999999999L540.0 612.9499999999999z" fill="#e020e0"/><path d="M539.5 629.9499999999999L543.5 629.9499999999999L543.0 633.9499999999999L541.5 636.9499999999999L540.0 633.9499999999999z" fill="#e020e0"/>
<path d="M721.5 540.9V571.9" stroke="#d020d0" stroke-width="1"/><path d="M719.5 549.9L723.5 549.9L723.0 545.9L721.5 542.9L720.0 545.9z" fill="#e020e0"/><path d="M719.5 562.9L723.5 562.9L723.0 566.9L721.5 569.9L720.0 566.9z" fill="#e020e0"/>
</svg>
<div class="tl" style="left:341.2px;top:686px;width:40px;text-align:center">0</div>
<div class="tl" style="left:421.2px;top:686px;width:40px;text-align:center">2</div>
<div class="tl" style="left:501.2px;top:686px;width:40px;text-align:center">4</div>
<div class="tl" style="left:581.2px;top:686px;width:40px;text-align:center">6</div>
<div class="tl" style="left:661.2px;top:686px;width:40px;text-align:center">8</div>
<div class="tl" style="left:741.2px;top:686px;width:40px;text-align:center">10</div>
<div class="tl" style="left:308px;top:654.3px;width:42px;text-align:right">4</div>
<div class="tl" style="left:308px;top:624.4px;width:42px;text-align:right">6</div>
<div class="tl" style="left:308px;top:594.5px;width:42px;text-align:right">8</div>
<div class="tl" style="left:308px;top:564.6px;width:42px;text-align:right">10</div>
<div class="tl" style="left:308px;top:534.7px;width:42px;text-align:right">12</div>
<div class="tl" style="left:308px;top:504.8px;width:42px;text-align:right">14</div>
<div class="a t" style="left:575px;top:706px;font-size:15px;line-height:17px;color:#1a1a1a">A</div>
<div class="a t" style="left:313px;top:513px;font-size:14px;line-height:16px;color:#1a1a1a;transform:rotate(-90deg);transform-origin:7px 7px">B</div>
<div class="a" style="left:717px;top:313px;width:180px;height:37px;border:1px solid #000"></div>
<div class="a" style="left:734px;top:320px;width:6px;height:6px;background:#000"></div>
<div class="a t" style="left:756px;top:315px;font-size:13px;line-height:16px;color:#111">B</div>
<div class="a t" style="left:756px;top:332px;font-size:13px;line-height:16px;color:#111;letter-spacing:.45px">Linear Fit of Sheet1 B</div>
<div class="a" style="left:403px;top:360px;width:178px;height:89.5px;border:1.5px solid #000;background:#fff"></div>
<svg class="a" style="left:403px;top:360px" width="178" height="89.5" viewBox="0 0 178 89.5"><path d="M0 10.5H178 M0 20.5H178 M0 38.5H178 M0 49.5H178 M0 59.5H178 M0 69.5H178 M51.5 79.5H178 M51.5 0V89.5 M101.5 0V89.5 M126.5 0V89.5" stroke="#c4c4c4" stroke-width="1" fill="none"/><rect x=".75" y=".75" width="176.5" height="88.0" fill="none" stroke="#000" stroke-width="1.5"/></svg>
<div class="a t st2" style="left:406px;top:361px">Equation</div>
<div class="a t st2" style="left:456px;top:360px">y = a + b*x</div>
<div class="a t st2" style="left:406px;top:371px">Weight</div>
<div class="a t st2" style="left:456px;top:370px">No Weighting</div>
<div class="a t st2" style="left:406px;top:381px">Residual Sum of</div>
<div class="a t st2" style="left:406px;top:390px">Squares</div>
<div class="a t st2" style="left:440.5px;top:381px;width:60px;text-align:right">0</div>
<div class="a t st2" style="left:406px;top:400px">Pearson's r</div>
<div class="a t st2" style="left:440.5px;top:399px;width:60px;text-align:right">1</div>
<div class="a t st2" style="left:406px;top:410px">Adj. R-Square</div>
<div class="a t st2" style="left:440.5px;top:409px;width:60px;text-align:right">1</div>
<div class="a t st2" style="left:506px;top:420px">Value</div>
<div class="a t st2" style="left:531px;top:420px">Standard Error</div>
<div class="a t st2" style="left:406px;top:436px">B</div>
<div class="a t st2" style="left:456px;top:430px">Intercept</div>
<div class="a t st2" style="left:456px;top:440px">Slope</div>
<div class="a t st2" style="left:465.5px;top:430px;width:60px;text-align:right">3</div>
<div class="a t st2" style="left:465.5px;top:440px;width:60px;text-align:right">2</div>
<div class="a t st2" style="left:517.5px;top:430px;width:60px;text-align:right">0</div>
<div class="a t st2" style="left:517.5px;top:440px;width:60px;text-align:right">0</div>
<div class="a" style="left:694.5px;top:575px;width:178px;height:89.5px;border:1.5px solid #000;background:#fff"></div>
<svg class="a" style="left:694.5px;top:575px" width="178" height="89.5" viewBox="0 0 178 89.5"><path d="M0 10.5H178 M0 20.5H178 M0 38.5H178 M0 49.5H178 M0 59.5H178 M0 69.5H178 M51.5 79.5H178 M51.5 0V89.5 M101.5 0V89.5 M126.5 0V89.5" stroke="#c4c4c4" stroke-width="1" fill="none"/><rect x=".75" y=".75" width="176.5" height="88.0" fill="none" stroke="#000" stroke-width="1.5"/></svg>
<div class="a t st2" style="left:697.5px;top:576px">Equation</div>
<div class="a t st2" style="left:747.5px;top:575px">y = a + b*x</div>
<div class="a t st2" style="left:697.5px;top:586px">Weight</div>
<div class="a t st2" style="left:747.5px;top:585px">No Weighting</div>
<div class="a t st2" style="left:697.5px;top:596px">Residual Sum of</div>
<div class="a t st2" style="left:697.5px;top:605px">Squares</div>
<div class="a t st2" style="left:732.0px;top:596px;width:60px;text-align:right">0</div>
<div class="a t st2" style="left:697.5px;top:615px">Pearson's r</div>
<div class="a t st2" style="left:732.0px;top:614px;width:60px;text-align:right">1</div>
<div class="a t st2" style="left:697.5px;top:625px">Adj. R-Square</div>
<div class="a t st2" style="left:732.0px;top:624px;width:60px;text-align:right">1</div>
<div class="a t st2" style="left:797.5px;top:635px">Value</div>
<div class="a t st2" style="left:822.5px;top:635px">Standard Error</div>
<div class="a t st2" style="left:697.5px;top:651px">B</div>
<div class="a t st2" style="left:747.5px;top:645px">Intercept</div>
<div class="a t st2" style="left:747.5px;top:655px">Slope</div>
<div class="a t st2" style="left:757.0px;top:645px;width:60px;text-align:right">2</div>
<div class="a t st2" style="left:757.0px;top:655px;width:60px;text-align:right">1</div>
<div class="a t st2" style="left:809.0px;top:645px;width:60px;text-align:right">0</div>
<div class="a t st2" style="left:809.0px;top:655px;width:60px;text-align:right">0</div>
<!-- Graph menu -->
<div id="menu" class="a">
<div class="mi" style="top:2px">Plot Set<u>u</u>p...</div>
<div class="hl" style="top:23px"></div>
<div class="mi wt" style="top:23px">Add <u>P</u>lot to Layer</div>
<div class="arr" style="top:28px"></div>
<div class="mi" style="top:44px">Add Error <u>B</u>ars...</div>
<div class="mi" style="top:65px">Add <u>F</u>unction Graph...</div>
<div class="sep" style="top:88px"></div>
<div class="mi" style="top:92px">Rescale to Show <u>A</u>ll</div>
<div class="sc" style="top:92px">Ctrl+R</div>
<div class="sep" style="top:115px"></div>
<div class="mi" style="top:119px">Layer <u>M</u>anagement...</div>
<div class="sep" style="top:142px"></div>
<div class="mi" style="top:146px">Add Axis <u>S</u>crollbar</div>
<div class="arr" style="top:151px"></div>
<div class="mi" style="top:167px"><u>N</u>ew Layer(Axes)</div>
<div class="arr" style="top:172px"></div>
<div class="mi" style="top:188px">E<u>x</u>tract to Graphs...</div>
<div class="mi" style="top:209px">Apply Palette to <u>C</u>olor Map...</div>
<div class="sep" style="top:232px"></div>
<div class="mi" style="top:236px">Merge Graph <u>W</u>indows...</div>
<div class="mi" style="top:257px">Speed M<u>o</u>de...</div>
<div class="sep" style="top:280px"></div>
<div class="mi" style="top:284px">Update Le<u>g</u>end...</div>
<div class="sep" style="top:307px"></div>
<div class="mi" style="top:311px">New <u>L</u>egend</div>
<div class="sc" style="top:311px">Ctrl+L</div>
<div class="mi dis" style="top:332px">New En<u>h</u>anced Legend</div>
<div class="mi" style="top:353px">New <u>T</u>able...</div>
<div class="mi dis" style="top:374px">New <u>C</u>olor Scale</div>
<div class="mi" style="top:395px">New X<u>Y</u> Scaler</div>
<div class="sep" style="top:418px"></div>
<div class="mi" style="top:422px">Maximize La<u>y</u>er</div>
<div class="mi" style="top:443px"><u>E</u>xchange X-Y Axes</div>
<div class="mi" style="top:464px">Off<u>s</u>et Grouped Data in Layer</div>
<div class="arr" style="top:469px"></div>
<svg class="a" style="left:4px;top:93px" width="18" height="18" viewBox="0 0 18 18"><path d="M3.5 1.5V15.5H17" stroke="#000" stroke-width="1.3" fill="none"/><path d="M1 4l2.5-3 2.5 3M1 12l2.5 3M14 13l3 2.5-3 2.5M5.5 13.5l-2 2 2 2" stroke="#000" fill="none" stroke-width="1.1"/><path d="M6 5h2v2H6zM9 4h2v2H9zM12 4h2v2h-2zM7 8h2v2H7zM11 7h2v2h-2zM6 10h2v2H6zM9 11h2v2H9zM12 10h2v2h-2z" fill="#000"/></svg>
<svg class="a" style="left:4px;top:313px" width="17" height="17" viewBox="0 0 17 17"><rect x=".5" y=".5" width="15" height="15" fill="#fff" stroke="#000"/><path d="M2 5h5M2 11h6" stroke="#000" stroke-width="1.2"/><path d="M2 11h5" stroke="#0000c0" stroke-width="1.2"/><circle cx="4.5" cy="11" r="1.5" fill="#0000c0"/><text x="9" y="8" font-size="7" font-weight="bold" font-family="Liberation Sans">B</text><text x="9" y="14.5" font-size="7" font-weight="bold" font-family="Liberation Sans">C</text></svg>
<svg class="a" style="left:5px;top:357px" width="14" height="12" viewBox="0 0 14 12"><rect x=".5" y=".5" width="13" height="10.5" fill="#fff" stroke="#000" stroke-width="1.2"/><path d="M.5 4h13M.5 7.5h13M4.5 .5v10.5M9 .5v10.5" stroke="#000" stroke-width="1"/></svg>
<svg class="a" style="left:4px;top:377px" width="17" height="16" viewBox="0 0 17 16"><path d="M0 1.5h16M0 5.5h16M0 9.5h16M0 13.5h16" stroke="#a8a8a8" stroke-width="3"/></svg>
<svg class="a" style="left:6px;top:397px" width="11" height="17" viewBox="0 0 11 17"><rect x=".6" y=".6" width="9" height="15.5" fill="#fff" stroke="#000" stroke-width="1.2"/><path d="M6.5 2.5v4M5 4h3M2.5 8h3M4 6.5v3M6.5 10v4M5 12h3" stroke="#000" stroke-width="1"/></svg>
</div>
<div id="sub" class="a">
<div class="smi" style="top:2px;left:26px"><u>L</u>ine...</div>
<div class="smi" style="top:23px;left:26px"><u>S</u>catter...</div>
<div class="sep" style="top:46px;left:4px;right:2px"></div>
<div class="a" style="left:2px;top:50px;width:21px;height:21px;border:1px solid;border-color:#fff #a0a0a0 #a0a0a0 #fff"></div>
<div class="a" style="left:24px;top:50px;width:132px;height:21px;background:#3399ff"></div>
<div class="smi wt" style="top:50px;left:26px">Line + S<u>y</u>mbol...</div>
<div class="smi" style="top:71px;left:26px"><u>C</u>olumn...</div>
<div class="smi" style="top:92px;left:26px"><u>A</u>rea...</div>
<svg class="a" style="left:2px;top:4px" width="18" height="16" viewBox="0 0 18 16"><path d="M2.8 14.8L19 .8" stroke="#000" stroke-width="1.1"/></svg>
<svg class="a" style="left:5px;top:26px" width="14" height="14" viewBox="0 0 14 14"><path d="M0 10h3v3H0zM6 5h3v3H6zM11 0h3v3h-3z" fill="#000"/></svg>
<svg class="a" style="left:6px;top:53px" width="14" height="14" viewBox="0 0 14 14"><path d="M1.5 11.5L12.5 1.5" stroke="#000" stroke-width="1.2"/><path d="M0 10h3.5v3.5H0zM5 6h3.5v3.5H5zM10 0h3.5v3.5H10z" fill="#000"/></svg>
<svg class="a" style="left:4px;top:74px" width="16" height="16" viewBox="0 0 16 16"><path d="M.5 4.5h5v11h-5zM5.5 .5h5v15h-5zM10.5 4.5h5v11h-5z" fill="#ee1010" stroke="#000" stroke-width="1"/></svg>
<svg class="a" style="left:4px;top:95px" width="16" height="16" viewBox="0 0 16 16"><path d="M0 6l4-5 4 5 4-5 4 5v10H0z" fill="#10e010"/><path d="M0 7l4 4 4-3 4 3 4-4v9H0z" fill="#e01010"/><path d="M0 11l4-2.5 3 2 3-2.5 3 2 3-1V15H0z" fill="#000"/></svg>
</div>
</body></html>
